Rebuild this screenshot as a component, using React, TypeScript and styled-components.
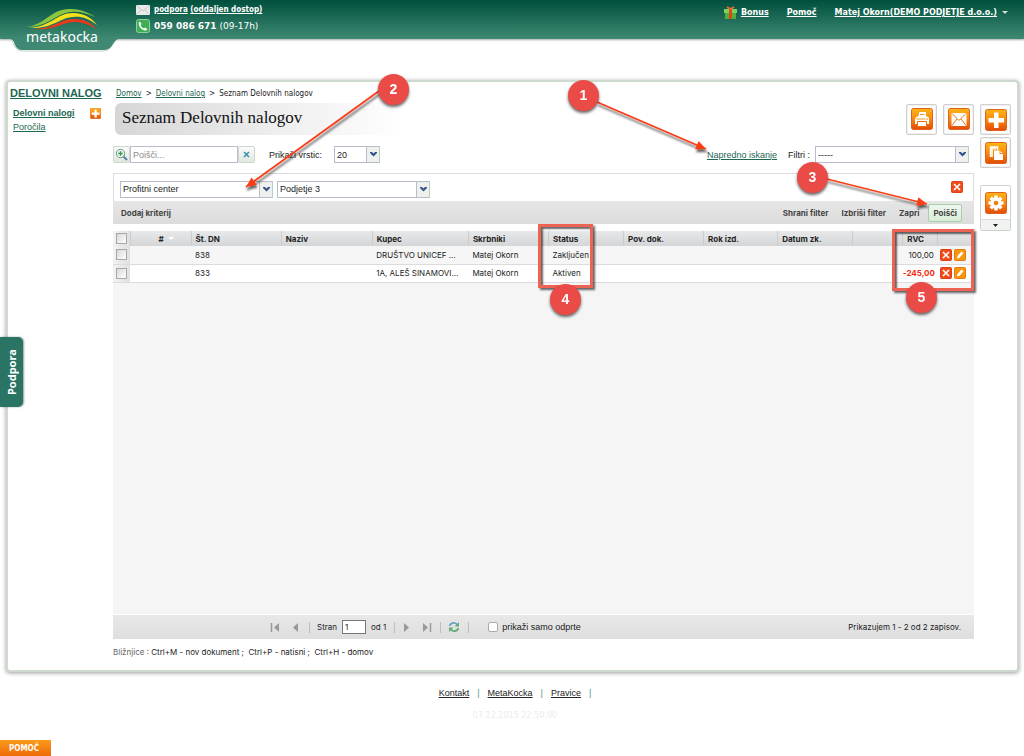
import React from "react";
import styled, { createGlobalStyle } from "styled-components";

const ARIAL = '"Liberation Sans", Arial, sans-serif';
const SMALL = 'Inter, "Liberation Sans", Arial, sans-serif';
const VERDANA = '"DejaVu Sans", Verdana, sans-serif';
const TAHOMA = '"DejaVu Sans Condensed", "DejaVu Sans", Tahoma, sans-serif';
const GREEN = "#1d6652";

const GlobalStyle = createGlobalStyle`
  *, *::before, *::after { box-sizing: border-box; }
  html, body { margin: 0; padding: 0; background: #fff; }
  body { font: 9px/12px ${ARIAL}; color: #222; }
  button, input, select { font: inherit; color: inherit; margin: 0; }
  button { padding: 0; border: 0; background: none; cursor: pointer; }
  svg { display: block; flex: none; }
`;

const Page = styled.div`
  position: relative;
  min-height: 100vh;
  overflow: hidden;
`;

/* ---------- header ---------- */

const Header = styled.header`
  display: flex;
  align-items: flex-start;
  height: 39px;
  padding: 0 16px 0 10px;
  background: linear-gradient(#00503d, #22705b 55%, #3f8974);
  box-shadow: 0 1px 2px rgba(0, 0, 0, 0.35);
  color: #fff;
`;

const LogoLink = styled.a`
  flex: none;
  width: 108px;
  height: 52px;
  text-decoration: none;
`;

const Contact = styled.div`
  display: grid;
  grid-template-columns: 14px auto;
  column-gap: 4px;
  row-gap: 2px;
  align-items: center;
  padding: 3px 0 0 18px;
`;

const ContactLine = styled.div<{ $link?: boolean }>`
  font: ${(p) => (p.$link ? `bold 8px/14px ${TAHOMA}` : `9px/14px ${VERDANA}`)};
  white-space: nowrap;
  a { color: inherit; }
`;

const UserNav = styled.nav`
  display: flex;
  align-items: center;
  gap: 18px;
  margin-left: auto;
  padding-top: 5px;
  font: bold 8px/16px ${VERDANA};
`;

const NavLink = styled.a`
  display: flex;
  align-items: center;
  gap: 4px;
  color: #fff;
  white-space: nowrap;
  text-decoration: none;
  span { text-decoration: underline; }
`;

/* ---------- panel ---------- */

const Panel = styled.div`
  display: grid;
  grid-template-columns: 105px minmax(0, 1fr) 31px;
  margin: 41px 5px 0 6px;
  padding: 0 6px 12px 0;
  border: 2px solid #cddacd;
  border-radius: 4px;
  background: #fff;
  box-shadow: 0 1px 4px rgba(0, 0, 0, 0.4);
`;

const Sidebar = styled.aside`
  padding: 4px 0 0 2px;
  a { color: ${GREEN}; white-space: nowrap; }
`;

const SideTitle = styled.a`
  font: bold 11px/14px ${ARIAL};
`;

const SideList = styled.ul`
  list-style: none;
  margin: 6px 0 0;
  padding: 0 12px 0 3px;
  font: 9px/14px ${ARIAL};
`;

const SideItem = styled.li<{ $bold?: boolean }>`
  display: flex;
  align-items: center;
  justify-content: space-between;
  font-weight: ${(p) => (p.$bold ? "bold" : "normal")};
`;

const Main = styled.main`
  display: flex;
  flex-direction: column;
  min-width: 0;
  margin-right: 6px;
`;

const Breadcrumb = styled.nav`
  display: flex;
  gap: 4px;
  margin-left: 3px;
  padding-top: 5px;
  font: 8px/14px ${TAHOMA};
  white-space: nowrap;
  a { color: ${GREEN}; }
`;

const TitleRow = styled.div`
  display: flex;
  align-items: center;
  justify-content: space-between;
  height: 32px;
  margin: 2px 0 0 2px;
`;

const Title = styled.h1`
  width: 290px;
  margin: 0;
  padding: 0 7px 2px;
  border-radius: 6px;
  background: linear-gradient(90deg, #d6d6d6, #f0f0f0 60%, #fff);
  color: #111;
  font: 17px/30px "Liberation Serif", Georgia, serif;
`;

const ButtonGroup = styled.div`
  display: flex;
  gap: 6px;
`;

const ToolButton = styled.button`
  display: flex;
  align-items: center;
  justify-content: center;
  width: 31px;
  height: 31px;
  border: 1px solid #cfcfcf;
  border-radius: 2px;
  background: #fff;
  box-shadow: inset 0 0 0 1px #f1f1f1;
`;

const Rail = styled.div`
  display: flex;
  flex-direction: column;
  gap: 2px;
  padding-top: 22px;
`;

const SplitButton = styled.div`
  display: flex;
  flex-direction: column;
  margin-top: 15px;
  border: 1px solid #cfcfcf;
  border-radius: 2px;
  background: #fff;
  button { display: flex; align-items: center; justify-content: center; height: 33px; }
  button + button { height: 11px; border-top: 1px solid #ddd; background: #f1f3f1; }
`;

/* ---------- form row ---------- */

const FormRow = styled.div`
  display: flex;
  align-items: center;
  height: 17px;
  margin-top: 11px;
  padding-right: 5px;
`;

const IconButton = styled.button`
  display: flex;
  align-items: center;
  justify-content: center;
  width: 17px;
  height: 17px;
  border: 1px solid #cfd6cf;
  border-radius: 2px;
  background: linear-gradient(#fafafa, #dfe9df);
`;

const SearchInput = styled.input`
  width: 108px;
  height: 17px;
  padding: 0 2px;
  border: 1px solid #b9bccf;
  background: #fff;
  &::placeholder { color: #8b8b8b; opacity: 1; }
`;

const FieldLabel = styled.label<{ $before?: number; $after: number }>`
  margin: 0 ${(p) => p.$after}px 0 ${(p) => p.$before ?? 0}px;
  white-space: nowrap;
`;

const SelectShell = styled.span<{ $w: number }>`
  display: inline-grid;
  grid-template-columns: 1fr 13px;
  flex: 0 1 ${(p) => p.$w}px;
  width: ${(p) => p.$w}px;
  height: 17px;
  border: 1px solid #b9bccf;
  border-right-color: #b4d3b9;
  background: #fff;
  select {
    grid-area: 1 / 1 / 2 / 3;
    appearance: none;
    width: 100%;
    height: 15px;
    padding: 0 2px;
    border: 0;
    border-radius: 0;
    background: transparent;
  }
  i {
    grid-area: 1 / 2;
    display: flex;
    align-items: center;
    justify-content: center;
    border-left: 1px solid #b9bccf;
    background: #eef0ee;
    pointer-events: none;
  }
`;

const AdvancedLink = styled.a`
  margin: 0 11px 0 auto;
  color: ${GREEN};
`;

const Criteria = styled.section`
  margin-top: 10px;
`;

const CriteriaRow = styled.div`
  display: flex;
  align-items: center;
  gap: 4px;
  height: 28px;
  padding: 3px 10px 0 6px;
  border: 1px solid #dcdcdc;
  border-bottom: 0;
  > button { margin: -4px 0 0 auto; }
`;

const CriteriaBar = styled.div`
  display: flex;
  align-items: center;
  gap: 13px;
  height: 23px;
  padding: 0 12px 0 8px;
  background: linear-gradient(#e6e6e6, #dcdcdc);
  font: bold 8px/12px ${SMALL};
  color: #444;
`;

const BarButton = styled.button<{ $first?: boolean; $active?: boolean }>`
  margin-right: ${(p) => (p.$first ? "auto" : "0")};
  ${(p) =>
    p.$active &&
    `
    height: 18px;
    margin-left: -4px;
    padding: 0 4px;
    border: 1px solid #a9cfae;
    border-radius: 2px;
    background: linear-gradient(#eef7ee, #d9ecd9);
  `}
`;

/* ---------- grid ---------- */

const GridArea = styled.div`
  flex: 1 1 auto;
  min-height: 383px;
  margin-top: 7px;
  background: #f5f5f5;
`;

const Table = styled.table`
  width: 100%;
  table-layout: fixed;
  border-collapse: collapse;
  font: 8px/12px ${SMALL};
  th, td {
    padding: 0 0 0 4px;
    text-align: left;
    white-space: nowrap;
  }
  th { height: 15px; border-left: 1px solid #cbcdcf; background: linear-gradient(#e6e8e9, #d3d5d7); color: #222; }
  th:first-child { border-left: 0; }
  td { height: 18px; border-bottom: 1px solid #dcdcdc; background: #fff; }
  tbody tr:first-child td { background: #f6f6f6; }
  th.pick, tbody tr td.pick { padding: 0 3px; background: linear-gradient(90deg, #f3f3f3, #e0e0e0); }
  td.num { padding: 0 4px 0 0; text-align: right; }
  td.tools { padding-left: 2px; }
`;

const SortLabel = styled.span`
  display: flex;
  align-items: center;
  gap: 4px;
  padding-left: 24px;
  &::after {
    content: "";
    border: 3px solid transparent;
    border-top-color: #fff;
    border-bottom: 0;
  }
`;

const Pick = styled.input`
  appearance: none;
  display: block;
  width: 11px;
  height: 11px;
  border: 1px solid #a8a8a8;
  background: linear-gradient(135deg, #d8d8d8, #fff);
`;

const Money = styled.span<{ $negative?: boolean }>`
  color: ${(p) => (p.$negative ? "#f52a10" : "#222")};
  font-weight: ${(p) => (p.$negative ? "bold" : "normal")};
`;

const RowActions = styled.div`
  display: flex;
  gap: 2px;
`;

const Pager = styled.div`
  display: flex;
  align-items: center;
  height: 25px;
  padding: 0 13px 0 157px;
  border-top: 1px solid #fff;
  background: linear-gradient(#e8e8e8, #dedede);
  font: 8px/12px ${SMALL};
`;

const PagerGroup = styled.div<{ $gap: number; $end?: number }>`
  display: flex;
  align-items: center;
  gap: ${(p) => p.$gap}px;
  height: 11px;
  padding-right: ${(p) => p.$end ?? 8}px;
  margin-right: 7px;
  border-right: 1px solid #bdbdbd;
`;

const Inset = styled.span`
  display: flex;
  padding-left: 2px;
`;

const PageInput = styled.input`
  width: 24px;
  height: 14px;
  padding: 0 2px;
  border: 1px solid #777;
  background: #fff;
`;

const OnlyOpen = styled.label`
  display: flex;
  align-items: center;
  gap: 4px;
  margin-left: 12px;
  font: 9px/12px ${ARIAL};
  input {
    appearance: none;
    width: 10px;
    height: 10px;
    border: 1px solid #aaa;
    border-radius: 2px;
    background: #fff;
  }
`;

const Summary = styled.span`
  margin-left: auto;
`;

const Shortcuts = styled.p`
  margin: 7px 0 0;
  font: 8px/12px ${SMALL};
  white-space: pre-wrap;
  span { color: #666; }
`;

/* ---------- footer ---------- */

const Footer = styled.footer`
  padding: 15px 0 0 6px;
  text-align: center;
`;

const FooterLinks = styled.nav`
  display: flex;
  justify-content: center;
  gap: 8px;
  color: #4a9a84;
  a { color: #222; }
`;

const Stamp = styled.div`
  margin-top: 11px;
  color: #ececec;
  font: 8px/12px ${VERDANA};
`;

const SupportTab = styled.button`
  position: absolute;
  left: 0;
  top: 337px;
  width: 23px;
  height: 70px;
  border-radius: 0 5px 5px 0;
  background: #2a7466;
  box-shadow: 1px 0 2px rgba(0, 0, 0, 0.4);
  color: #fff;
  font: bold 11px/23px "Noto Sans", sans-serif;
  writing-mode: vertical-rl;
  span { display: block; transform: rotate(180deg); }
`;

const HelpTab = styled.button`
  position: fixed;
  left: 0;
  bottom: 0;
  width: 51px;
  height: 16px;
  padding-right: 3px;
  background: linear-gradient(#fb9a1c, #ee6a06);
  color: #fff;
  font: bold 8px/17px ${TAHOMA};
`;

/* ---------- annotations ---------- */

const Arrows = styled.svg`
  position: absolute;
  left: 0;
  top: 0;
  pointer-events: none;
`;

const Badge = styled.div<{ $x: number; $y: number }>`
  position: absolute;
  left: ${(p) => p.$x - 15}px;
  top: ${(p) => p.$y - 15}px;
  width: 31px;
  height: 31px;
  border-radius: 50%;
  background: #ea4b47;
  box-shadow: 0 2px 3px rgba(0, 0, 0, 0.6);
  color: #fff;
  font: bold 14px/31px ${ARIAL};
  text-align: center;
`;

const Frame = styled.div<{ $x: number; $y: number; $w: number; $h: number }>`
  position: absolute;
  left: ${(p) => p.$x}px;
  top: ${(p) => p.$y}px;
  width: ${(p) => p.$w}px;
  height: ${(p) => p.$h}px;
  border: 3px solid #ee6353;
  box-shadow: 2px 2px 2px rgba(0, 0, 0, 0.6), inset 2px 2px 2px rgba(0, 0, 0, 0.6);
  pointer-events: none;
`;

/* ---------- drawings ---------- */

const Logo = () => (
  <svg width="108" height="52" viewBox="0 0 108 52" role="img" aria-label="metakocka">
    <path d="M0 39 C3 39 4 42 5 45 Q7 50 12 50 H94 Q99 50 102 46 Q106 39 108 39Z" fill="#3f8974" />
    <path d="M2 40 Q5 51 12 51 H94 Q100 51 104 42" fill="none" stroke="#9cb8ae" strokeWidth="1" opacity=".6" />
    <path d="M16 27 C36 25 40 9 60 9 C72 9 81 14 85 17 C76 13 69 11 61 12 C46 13 39 27 16 27Z" fill="#8cc63f" />
    <path d="M18 28 C42 27 46 13 63 13 C74 13 82 18 87 25 C78 18 71 16 63 17 C48 18 44 29 18 28Z" fill="#f6e01a" />
    <path d="M22 29 C44 29 50 19 64 19 C75 19 82 23 86 29 C78 24 72 22 64 22 C50 23 45 31 22 29Z" fill="#e8391c" />
    <text x="52" y="42" textAnchor="middle" fontFamily='"Noto Sans", sans-serif' fontSize="14" fill="#fff">metakocka</text>
  </svg>
);

const Orange = ({ size, children }: { size: number; children?: React.ReactNode }) => (
  <svg width={size} height={size} viewBox="0 0 22 22" aria-hidden="true">
    <defs>
      <linearGradient id="orange" x1="0" y1="0" x2="0" y2="1">
        <stop offset="0" stopColor="#fdb515" />
        <stop offset=".5" stopColor="#f78a10" />
        <stop offset="1" stopColor="#e24a04" />
      </linearGradient>
    </defs>
    <rect x=".5" y=".5" width="21" height="21" rx="2" fill="url(#orange)" stroke="#e0601c" />
    {children}
  </svg>
);

const Plus = () => <path d="M9 3.500h4.500V9H19v4.500h-5.500V19H9v-5.500H3.500V9H9z" fill="#fff" />;

const Print = () => (
  <g>
    <path d="M7 9L8.500 4H15v5z" fill="#fff" />
    <path d="M9 6.500h4.500" stroke="#f39a20" />
    <path d="M4 16V10.500L6 8.500h10.500L18 10v6z" fill="#fff" />
    <path d="M5.500 11h9" stroke="#f39a20" />
    <path d="M15.500 11h1.500" stroke="#ee6a12" />
    <path d="M6.500 13.500h9v5h-9z" fill="#fff" stroke="#ee6a12" />
  </g>
);

const Mail = () => (
  <g fill="none" stroke="#ec7112">
    <rect x="3.500" y="5" width="15" height="13" fill="#fff" stroke="none" />
    <path d="M4 5.500l7 7 7-7M4 17.500l5-6.500M18 17.500l-5-6.500" />
  </g>
);

const Copy = () => (
  <g>
    <path d="M5.500 15V5h7v3" fill="none" stroke="#fff" strokeWidth="1.500" />
    <path d="M5 5h6v2.500H8V15H5z" fill="#fff" opacity=".85" />
    <path d="M9 8.500h6l3 3V18H9z" fill="#fff" />
    <path d="M15 8.500v3h3" fill="none" stroke="#f08a20" />
  </g>
);

const Gear = () => (
  <g>
    {[0, 45, 90, 135].map((a) => (
      <rect key={a} x="9.250" y="3.500" width="3.500" height="15" rx=".5" fill="#fff" transform={`rotate(${a} 11 11)`} />
    ))}
    <circle cx="11" cy="11" r="5.500" fill="#fff" />
    <circle cx="11" cy="11" r="2.300" fill="#f0800e" />
  </g>
);

const RedCross = () => (
  <svg width="12" height="12" viewBox="0 0 12 12" aria-hidden="true">
    <rect x=".5" y=".5" width="11" height="11" rx="1" fill="#ee4c1a" stroke="#df3f12" />
    <path d="M3 3l6 6M9 3l-6 6" stroke="#fff" strokeWidth="1.600" />
  </svg>
);

const Pencil = () => (
  <svg width="12" height="12" viewBox="0 0 12 12" aria-hidden="true">
    <rect x=".5" y=".5" width="11" height="11" rx="1" fill="#f7960f" stroke="#e57a0a" />
    <path d="M3 9.500L3.500 7l4-4.500 2 1.700-4 4.500z" fill="#fff" />
  </svg>
);

const Chevron = () => (
  <svg width="7" height="5" viewBox="0 0 7 5" aria-hidden="true">
    <path d="M0 0h2l1.500 1.500L5 0h2v1L3.500 4.500 0 1z" fill="#34518f" />
  </svg>
);

const Gift = () => (
  <svg width="13" height="14" viewBox="0 0 13 14" aria-hidden="true">
    <rect x="0" y="3" width="13" height="4" fill="#7fd05a" />
    <rect x="1" y="7" width="11" height="6" fill="#4fae3c" />
    <path d="M5 3h3v10H5z" fill="#d8491b" />
    <path d="M6.500 3L3 1M6.500 3L10 1" stroke="#ef6a2c" strokeWidth="1.800" />
  </svg>
);

const Envelope = () => (
  <svg width="14" height="10" viewBox="0 0 14 10" aria-hidden="true">
    <rect width="14" height="10" rx="1" fill="#e9ebea" />
    <path d="M1 1l6 5 6-5M1 9l4-4M13 9L9 5" fill="none" stroke="#c2c9c5" />
  </svg>
);

const Phone = () => (
  <svg width="14" height="14" viewBox="0 0 14 14" aria-hidden="true">
    <rect x=".5" y=".5" width="13" height="13" rx="2" fill="#3fae55" stroke="#8fd19a" />
    <path d="M4 2.500L5.500 5l-1 1C5 7.500 6.500 9 8 9.600l1-1 2.300 1.500c-.4 1.200-1.500 1.700-2.700 1.400C5.500 10.700 3.300 8.300 2.700 5.300 2.500 4 3 3 4 2.500z" fill="#fff" />
  </svg>
);

const Magnifier = () => (
  <svg width="13" height="13" viewBox="0 0 13 13" aria-hidden="true">
    <path d="M8 8l4 4" stroke="#5c7da8" strokeWidth="2" />
    <circle cx="5.500" cy="5.500" r="4.200" fill="#eef6f0" stroke="#6f9a8a" />
    <path d="M5.500 3.300v4.400M3.300 5.500h4.400" stroke="#2f9a46" strokeWidth="1.400" />
  </svg>
);

const PageArrow = ({ back, end }: { back?: boolean; end?: boolean }) => (
  <svg width={end ? 9 : 6} height="9" viewBox={end ? "0 0 9 9" : "0 0 6 9"} aria-hidden="true">
    <g transform={back ? `translate(${end ? 9 : 6} 0) scale(-1 1)` : undefined}>
      <path d="M0 0l5 4.500L0 9z" fill="#999" />
      {end && <path d="M7.500 0v9" stroke="#999" strokeWidth="1.500" />}
    </g>
  </svg>
);

const Refresh = () => (
  <svg width="12" height="12" viewBox="0 0 12 12" fill="none" strokeWidth="1.800" aria-hidden="true">
    <path d="M1.500 5C2.500 1.500 7 1 9 3.500" stroke="#6aa3c4" />
    <path d="M10.500 7C9.500 10.500 5 11 3 8.500" stroke="#63a878" />
    <path d="M11 1v4.500H6.500zM1 11V6.500h4.500z" fill="#63a878" />
  </svg>
);

const Select = ({ id, label, value, width }: { id: string; label?: string; value: string; width: number }) => (
  <SelectShell $w={width}>
    <select id={id} aria-label={label} defaultValue={value}>
      <option>{value}</option>
    </select>
    <i><Chevron /></i>
  </SelectShell>
);

/* ---------- data ---------- */

const COLUMNS: [string, number][] = [
  ["#", 61], ["Št. DN", 90], ["Naziv", 91], ["Kupec", 96], ["Skrbniki", 80], ["Status", 75],
  ["Pov. dok.", 80], ["Rok izd.", 74], ["Datum zk.", 75], ["", 50], ["RVC", 35],
];

const ROWS = [
  { no: "838", buyer: "DRUŠTVO UNICEF …", owner: "Matej Okorn", status: "Zaključen", rvc: "100,00", negative: false },
  { no: "833", buyer: "1A, ALEŠ SINAMOVI…", owner: "Matej Okorn", status: "Aktiven", rvc: "-245,00", negative: true },
];

const ARROWS = [
  { from: [597, 102], to: [706, 149] },
  { from: [379, 91], to: [246, 187] },
  { from: [827, 179], to: [927, 204] },
];

const Arrow = ({ from, to }: { from: number[]; to: number[] }) => {
  const angle = (Math.atan2(to[1] - from[1], to[0] - from[0]) * 180) / Math.PI;
  return (
    <g filter="url(#drop)">
      <path d={`M${from[0]} ${from[1]}L${to[0]} ${to[1]}`} stroke="#fb3c17" strokeWidth="1.800" />
      <path d="M0 0L-10 -4.500V4.500z" fill="#fb3c17" transform={`translate(${to[0]} ${to[1]}) rotate(${angle})`} />
    </g>
  );
};

export default function App() {
  return (
    <Page>
      <GlobalStyle />
      <Header>
        <LogoLink href="#home"><Logo /></LogoLink>
        <Contact>
          <Envelope />
          <ContactLine $link><a href="#podpora">podpora</a> <a href="#dostop">(oddaljen dostop)</a></ContactLine>
          <Phone />
          <ContactLine><b>059 086 671</b> (09-17h)</ContactLine>
        </Contact>
        <UserNav>
          <NavLink href="#bonus"><Gift /><span>Bonus</span></NavLink>
          <NavLink href="#pomoc"><span>Pomoč</span></NavLink>
          <NavLink href="#racun">
            <span>Matej Okorn(DEMO PODJETJE d.o.o.)</span>
            <svg width="7" height="4" viewBox="0 0 7 4" aria-hidden="true"><path d="M1 0h6L4 3z" fill="#cfe0da" /></svg>
          </NavLink>
        </UserNav>
      </Header>

      <Panel>
        <Sidebar>
          <SideTitle href="#dn">DELOVNI NALOG</SideTitle>
          <SideList>
            <SideItem $bold>
              <a href="#nalogi">Delovni nalogi</a>
              <button aria-label="Dodaj"><Orange size={11}><Plus /></Orange></button>
            </SideItem>
            <SideItem><a href="#porocila">Poročila</a></SideItem>
          </SideList>
        </Sidebar>

        <Main>
          <Breadcrumb>
            <a href="#domov">Domov</a>
            <span>&gt;</span>
            <a href="#nalog">Delovni nalog</a>
            <span>&gt;</span>
            <span>Seznam Delovnih nalogov</span>
          </Breadcrumb>
          <TitleRow>
            <Title>Seznam Delovnih nalogov</Title>
            <ButtonGroup>
              <ToolButton aria-label="Natisni"><Orange size={22}><Print /></Orange></ToolButton>
              <ToolButton aria-label="Pošlji"><Orange size={22}><Mail /></Orange></ToolButton>
            </ButtonGroup>
          </TitleRow>

          <FormRow>
            <IconButton aria-label="Išči"><Magnifier /></IconButton>
            <SearchInput placeholder="Poišči..." aria-label="Poišči" />
            <IconButton aria-label="Počisti">
              <svg width="7" height="7" viewBox="0 0 7 7"><path d="M1 1l5 5M6 1L1 6" stroke="#3f8fae" strokeWidth="1.600" /></svg>
            </IconButton>
            <FieldLabel htmlFor="rows" $before={14} $after={12}>Prikaži vrstic:</FieldLabel>
            <Select id="rows" value="20" width={46} />
            <AdvancedLink href="#napredno">Napredno iskanje</AdvancedLink>
            <FieldLabel htmlFor="filters" $after={5}>Filtri :</FieldLabel>
            <Select id="filters" value="-----" width={154} />
          </FormRow>

          <Criteria>
            <CriteriaRow>
              <Select id="field" label="Kriterij" value="Profitni center" width={153} />
              <Select id="value" label="Vrednost" value="Podjetje 3" width={153} />
              <button aria-label="Odstrani kriterij"><RedCross /></button>
            </CriteriaRow>
            <CriteriaBar>
              <BarButton $first>Dodaj kriterij</BarButton>
              <BarButton>Shrani filter</BarButton>
              <BarButton>Izbriši filter</BarButton>
              <BarButton>Zapri</BarButton>
              <BarButton $active>Poišči</BarButton>
            </CriteriaBar>
          </Criteria>

          <GridArea>
            <Table>
              <colgroup>
                <col width="17" />
                {COLUMNS.map(([name, w], i) => <col key={name + i} width={w} />)}
                <col width="36" />
              </colgroup>
              <thead>
                <tr>
                  <th className="pick"><Pick type="checkbox" aria-label="Izberi vse" /></th>
                  {COLUMNS.map(([name], i) => (
                    <th key={name + i}>{name === "#" ? <SortLabel>#</SortLabel> : name}</th>
                  ))}
                  <th />
                </tr>
              </thead>
              <tbody>
                {ROWS.map((r) => (
                  <tr key={r.no}>
                    <td className="pick"><Pick type="checkbox" aria-label={`Izberi ${r.no}`} /></td>
                    <td />
                    <td>{r.no}</td>
                    <td />
                    <td>{r.buyer}</td>
                    <td>{r.owner}</td>
                    <td>{r.status}</td>
                    <td /><td /><td /><td />
                    <td className="num"><Money $negative={r.negative}>{r.rvc}</Money></td>
                    <td className="tools">
                      <RowActions>
                        <button aria-label="Izbriši"><RedCross /></button>
                        <button aria-label="Uredi"><Pencil /></button>
                      </RowActions>
                    </td>
                  </tr>
                ))}
              </tbody>
            </Table>
          </GridArea>

          <Pager>
            <PagerGroup $gap={13} $end={11}>
              <button aria-label="Prva"><PageArrow back end /></button>
              <button aria-label="Prejšnja"><PageArrow back /></button>
            </PagerGroup>
            <PagerGroup $gap={5}>
              <label htmlFor="page">Stran</label>
              <PageInput id="page" defaultValue="1" />
              <span>od 1</span>
            </PagerGroup>
            <PagerGroup $gap={13}>
              <Inset><button aria-label="Naslednja"><PageArrow /></button></Inset>
              <button aria-label="Zadnja"><PageArrow end /></button>
            </PagerGroup>
            <PagerGroup $gap={0}>
              <button aria-label="Osveži"><Refresh /></button>
            </PagerGroup>
            <OnlyOpen><input type="checkbox" />prikaži samo odprte</OnlyOpen>
            <Summary>Prikazujem 1 - 2 od 2 zapisov.</Summary>
          </Pager>
          <Shortcuts><span>Bližnjice : </span>Ctrl+M - nov dokument ;  Ctrl+P - natisni ;  Ctrl+H - domov</Shortcuts>
        </Main>

        <Rail>
          <ToolButton aria-label="Nov"><Orange size={22}><Plus /></Orange></ToolButton>
          <ToolButton aria-label="Kopiraj"><Orange size={22}><Copy /></Orange></ToolButton>
          <SplitButton>
            <button aria-label="Nastavitve"><Orange size={22}><Gear /></Orange></button>
            <button aria-label="Več">
              <svg width="5" height="3" viewBox="0 0 5 3"><path d="M0 0h5L2.500 3z" fill="#222" /></svg>
            </button>
          </SplitButton>
        </Rail>
      </Panel>

      <Footer>
        <FooterLinks>
          <a href="#kontakt">Kontakt</a>|<a href="#metakocka">MetaKocka</a>|<a href="#pravice">Pravice</a>|
        </FooterLinks>
        <Stamp>07.12.2015 22:50:00</Stamp>
      </Footer>

      <SupportTab><span>Podpora</span></SupportTab>
      <HelpTab>POMOČ</HelpTab>

      <Frame $x={538} $y={224} $w={55} $h={64} />
      <Frame $x={892} $y={229} $w={82} $h={62} />
      <Arrows width="1024" height="756" viewBox="0 0 1024 756" aria-hidden="true">
        <defs>
          <filter id="drop" x="-20%" y="-20%" width="140%" height="150%">
            <feDropShadow dx="1" dy="3" stdDeviation="1" floodColor="#000" floodOpacity=".6" />
          </filter>
        </defs>
        {ARROWS.map((a) => <Arrow key={a.from.join()} {...a} />)}
      </Arrows>
      <Badge $x={583} $y={95}>1</Badge>
      <Badge $x={393} $y={89}>2</Badge>
      <Badge $x={812} $y={177}>3</Badge>
      <Badge $x={565} $y={299}>4</Badge>
      <Badge $x={921} $y={297}>5</Badge>
    </Page>
  );
}
